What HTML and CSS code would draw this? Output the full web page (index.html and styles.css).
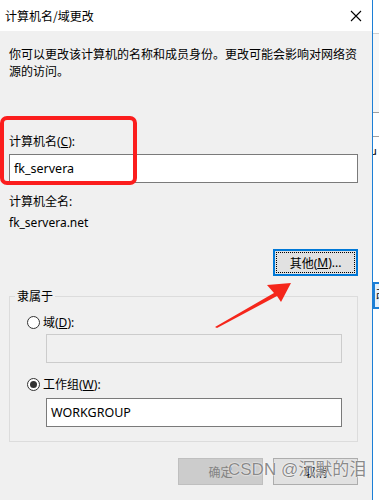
FILE: index.html
```html
<!DOCTYPE html>
<html lang="zh-CN">
<head>
  <meta charset="UTF-8">
  <meta name="viewport" content="width=device-width, initial-scale=1.0">
  <title>计算机名/域更改</title>
  <link rel="stylesheet" href="styles.css">
</head>
<body>
  <div class="screen">
    <div class="dialog">
      <!-- Title bar -->
      <div class="titlebar">
        <span class="title">计算机名/域更改</span>
        <svg class="close" width="12" height="12" viewBox="0 0 12 12">
          <path d="M1 1 L11 11 M11 1 L1 11" stroke="#000" stroke-width="1.1" fill="none"/>
        </svg>
      </div>

      <div class="content">
        <p class="desc">你可以更改该计算机的名称和成员身份。更改可能会影响对网络资<br>源的访问。</p>

        <div class="label name-label">计算机名(<u>C</u>):</div>
        <div class="textbox">fk_servera</div>

        <div class="label full-label">计算机全名:</div>
        <div class="label full-name">fk_servera.net</div>

        <div class="btn-row more-row">
          <button class="btn focused"><span class="focus-rect">其他(<u>M</u>)...</span></button>
        </div>

        <fieldset class="group">
          <legend>隶属于</legend>
          <div class="radio-row first">
            <span class="radio"></span>
            <span class="label">域(<u>D</u>):</span>
          </div>
          <div class="textbox disabled"></div>
          <div class="radio-row">
            <span class="radio checked"></span>
            <span class="label">工作组(<u>W</u>):</span>
          </div>
          <div class="textbox">WORKGROUP</div>
        </fieldset>

        <div class="btn-row bottom-row">
          <button class="btn disabled-btn">确定</button>
          <button class="btn">取消</button>
        </div>
      </div>

      <!-- annotations drawn over the screenshot -->
      <div class="highlight"></div>
      <svg class="arrow" width="379" height="500" viewBox="0 0 379 500">
        <polygon points="215,327 274,293 267,285 291,283 281,302 277,296 217,328" fill="#f5261b"/>
      </svg>
      <div class="watermark">CSDN @沉默的泪</div>
    </div>

    <!-- edge of the window behind -->
    <div class="behind">
      <div class="b-top"></div>
      <div class="b-row"></div>
      <div class="b-mid"></div>
      <div class="b-text">u</div>
      <div class="b-btn">改</div>
      <div class="b-rest"></div>
    </div>
  </div>
</body>
</html>
```

FILE: styles.css
```css
body {
  margin: 0;
  padding: 0;
  background: #ffffff;
  font-family: "Noto Sans", "Noto Sans CJK SC", sans-serif;
  font-size: 12px;
  color: #000;
}

.screen {
  display: flex;
  width: 379px;
  height: 500px;
  overflow: hidden;
}

/* Dialog */
.dialog {
  position: relative;
  width: 372px;
  flex-shrink: 0;
  background: #f0f0f0;
  border-right: 1px solid #1c7fd6;
}

.titlebar {
  display: flex;
  align-items: center;
  justify-content: space-between;
  height: 31px;
  background: #ffffff;
  padding: 0 10px 0 5px;
}

.title {
  font-family: "Noto Sans CJK SC", sans-serif;
  font-size: 12px;
}

.close {
  display: block;
}

.content {
  padding: 0 14px 0 9px;
}

.desc {
  margin: 14px 0 0;
  line-height: 17px;
  font-family: "Noto Sans CJK SC", sans-serif;
  white-space: nowrap;
}

.label {
  line-height: 17px;
  white-space: nowrap;
}

.name-label {
  margin-top: 54px;
}

.full-label {
  margin-top: 10px;
}

.full-name {
  margin-top: 4px;
}

.textbox {
  box-sizing: border-box;
  height: 29px;
  margin-top: 4px;
  padding: 0 4px;
  line-height: 27px;
  background: #ffffff;
  border: 1px solid #7a7a7a;
  font-size: 12.5px;
}

.textbox.disabled {
  background: #f0f0f0;
  border-color: #cccccc;
}

/* Buttons */
.btn-row {
  display: flex;
  justify-content: flex-end;
  gap: 10px;
}

.more-row {
  margin-top: 18px;
}

.bottom-row {
  margin-top: 16px;
}

.btn {
  box-sizing: border-box;
  width: 85px;
  height: 27px;
  padding: 0;
  background: #e1e1e1;
  border: 1px solid #adadad;
  font-family: "Noto Sans", "Noto Sans CJK SC", sans-serif;
  font-size: 12px;
  color: #000;
}

.btn.focused {
  border: 2px solid #0078d7;
  padding: 1px;
}

.focus-rect {
  display: flex;
  align-items: center;
  justify-content: center;
  height: 100%;
  border: 1px dotted #000;
  box-sizing: border-box;
}

.disabled-btn {
  background: #cccccc;
  border-color: #bfbfbf;
  color: #838383;
}

/* Group box */
.group {
  margin: 12px 0 0;
  padding: 0 15px 14px 17px;
  border: 1px solid #dcdcdc;
}

.group legend {
  margin-left: -12px;
  padding: 0 2px;
  line-height: 17px;
}

.radio-row {
  display: flex;
  align-items: center;
  gap: 3px;
  margin-top: 13px;
}

.radio-row.first {
  margin-top: 9px;
}

.radio-row + .textbox {
  margin-top: 3px;
  margin-left: 19px;
}

.radio-row + .textbox:last-child {
  margin-top: 5px;
}

.radio {
  box-sizing: border-box;
  width: 13px;
  height: 13px;
  border: 1px solid #333;
  border-radius: 50%;
  background: #fff;
  display: flex;
  align-items: center;
  justify-content: center;
}

.radio.checked::after {
  content: "";
  width: 7px;
  height: 7px;
  border-radius: 50%;
  background: #333;
}

/* Annotations */
.highlight {
  position: absolute;
  left: 0;
  top: 116px;
  width: 137px;
  height: 69px;
  box-sizing: border-box;
  border: 4px solid #fb1d1d;
  border-radius: 7px;
}

.arrow {
  position: absolute;
  left: 0;
  top: 0;
}

.watermark {
  position: absolute;
  left: 228px;
  top: 459px;
  font-family: "Liberation Sans", "Noto Sans CJK SC", sans-serif;
  font-size: 17px;
  line-height: 22px;
  color: #8a8a8a;
  white-space: nowrap;
  text-shadow: 0 0 1px #fff, 0 0 2px #fff;
}

/* Window behind */
.behind {
  flex: 1;
  display: flex;
  flex-direction: column;
  background: #ffffff;
  font-size: 11px;
  overflow: hidden;
}

.b-top {
  height: 33px;
  border-bottom: 1px solid #d0d0d0;
}

.b-row {
  height: 78px;
  border-bottom: 1px solid #a0a0a0;
  background: #f7f7f7;
}

.b-mid {
  height: 23px;
  border-bottom: 1px solid #a0a0a0;
}

.b-text {
  height: 145px;
  line-height: 27px;
  margin-left: -3px;
}

.b-btn {
  box-sizing: border-box;
  height: 27px;
  border: 2px solid #1c7fd6;
  border-right: none;
  background: #e5f1fb;
  line-height: 22px;
  padding-left: 1px;
  white-space: nowrap;
}

.b-rest {
  flex: 1;
}
```
